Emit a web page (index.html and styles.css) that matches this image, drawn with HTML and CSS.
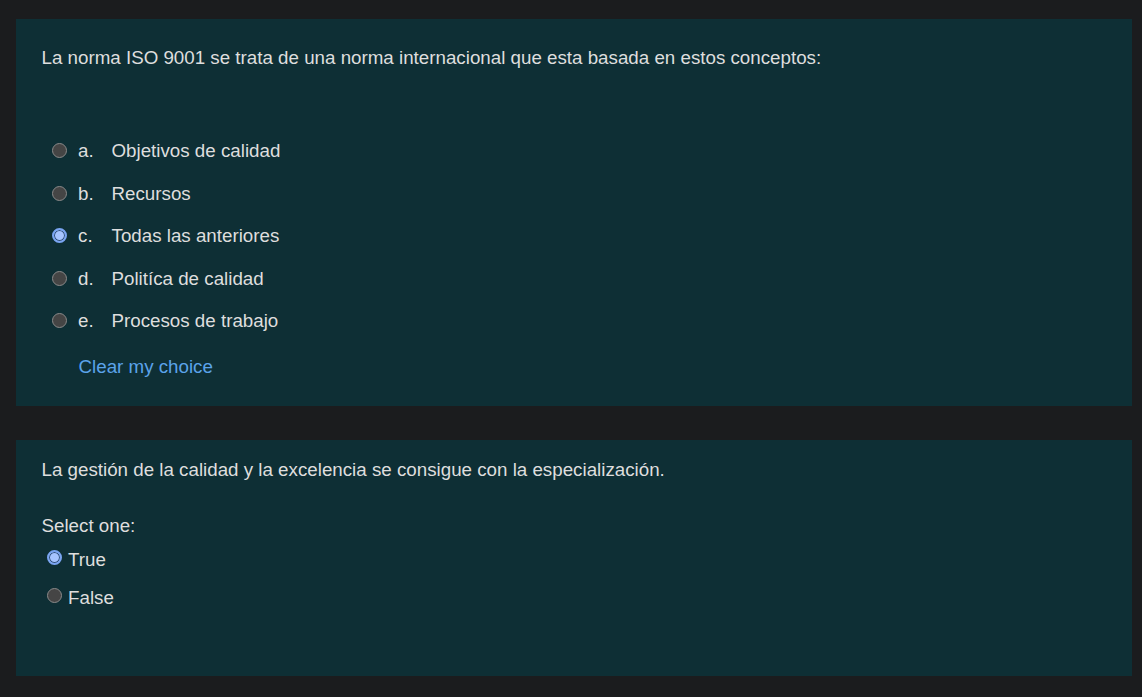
FILE: index.html
```html
<!DOCTYPE html>
<html lang="es">
<head>
<meta charset="utf-8">
<title>Quiz</title>
<link rel="stylesheet" href="styles.css">
</head>
<body>
<main class="page">
  <section class="card card-one">
    <p class="qtext">La norma ISO 9001 se trata de una norma internacional que esta basada en estos conceptos:</p>
    <div class="answers">
      <div class="opt"><span class="radio"></span><span class="letter">a.</span><span>Objetivos de calidad</span></div>
      <div class="opt"><span class="radio"></span><span class="letter">b.</span><span>Recursos</span></div>
      <div class="opt"><span class="radio checked"></span><span class="letter">c.</span><span>Todas las anteriores</span></div>
      <div class="opt"><span class="radio"></span><span class="letter">d.</span><span>Politíca de calidad</span></div>
      <div class="opt"><span class="radio"></span><span class="letter">e.</span><span>Procesos de trabajo</span></div>
    </div>
    <a class="clear" href="#">Clear my choice</a>
  </section>
  <section class="card card-two">
    <p class="qtext">La gestión de la calidad y la excelencia se consigue con la especialización.</p>
    <p class="prompt">Select one:</p>
    <div class="tf">
      <div class="tfopt"><span class="radio checked"></span><span>True</span></div>
      <div class="tfopt"><span class="radio"></span><span>False</span></div>
    </div>
  </section>
</main>
</body>
</html>
```
FILE: styles.css
```css
html, body {
  margin: 0;
  padding: 0;
  background: #1b1c1e;
}
body {
  font-family: "Liberation Sans", Arial, sans-serif;
  font-size: 18.75px;
  line-height: 21px;
  color: #dedede;
}
.page {
  padding: 19px 10px 21px 16px;
  display: flex;
  flex-direction: column;
  gap: 34.5px;
}
.card {
  background: #0e2f35;
  padding-left: 25.5px;
  box-sizing: border-box;
}
.card-one {
  height: 386.5px;
  padding-top: 27.5px;
}
.card-two {
  height: 236px;
  padding-top: 18.5px;
}
.qtext {
  margin: 0;
}
.answers {
  margin-top: 62px;
  display: flex;
  flex-direction: column;
}
.opt {
  height: 42.5px;
  display: flex;
  align-items: center;
  padding-left: 10.5px;
}
.letter {
  width: 33.5px;
}
.radio {
  width: 15px;
  height: 15px;
  box-sizing: border-box;
  border-radius: 50%;
  background: #454545;
  border: 1px solid #8a8a8a;
  flex: none;
  margin-right: 11px;
}
.radio.checked {
  background: #a6c4ff;
  border: 2px solid #7aa5f2;
  box-shadow: inset 0 0 0 1px #2f4f7a;
}
.clear {
  display: block;
  margin-top: 14px;
  margin-left: 37px;
  color: #5ba3ea;
  text-decoration: none;
  width: max-content;
}
.prompt {
  margin: 35px 0 0 0;
}
.tf {
  margin-top: 13px;
  display: flex;
  flex-direction: column;
  gap: 17px;
}
.tfopt {
  display: flex;
  align-items: center;
  padding-left: 5.5px;
}
.tfopt .radio {
  margin-right: 6px;
  position: relative;
  top: -2px;
}
```
